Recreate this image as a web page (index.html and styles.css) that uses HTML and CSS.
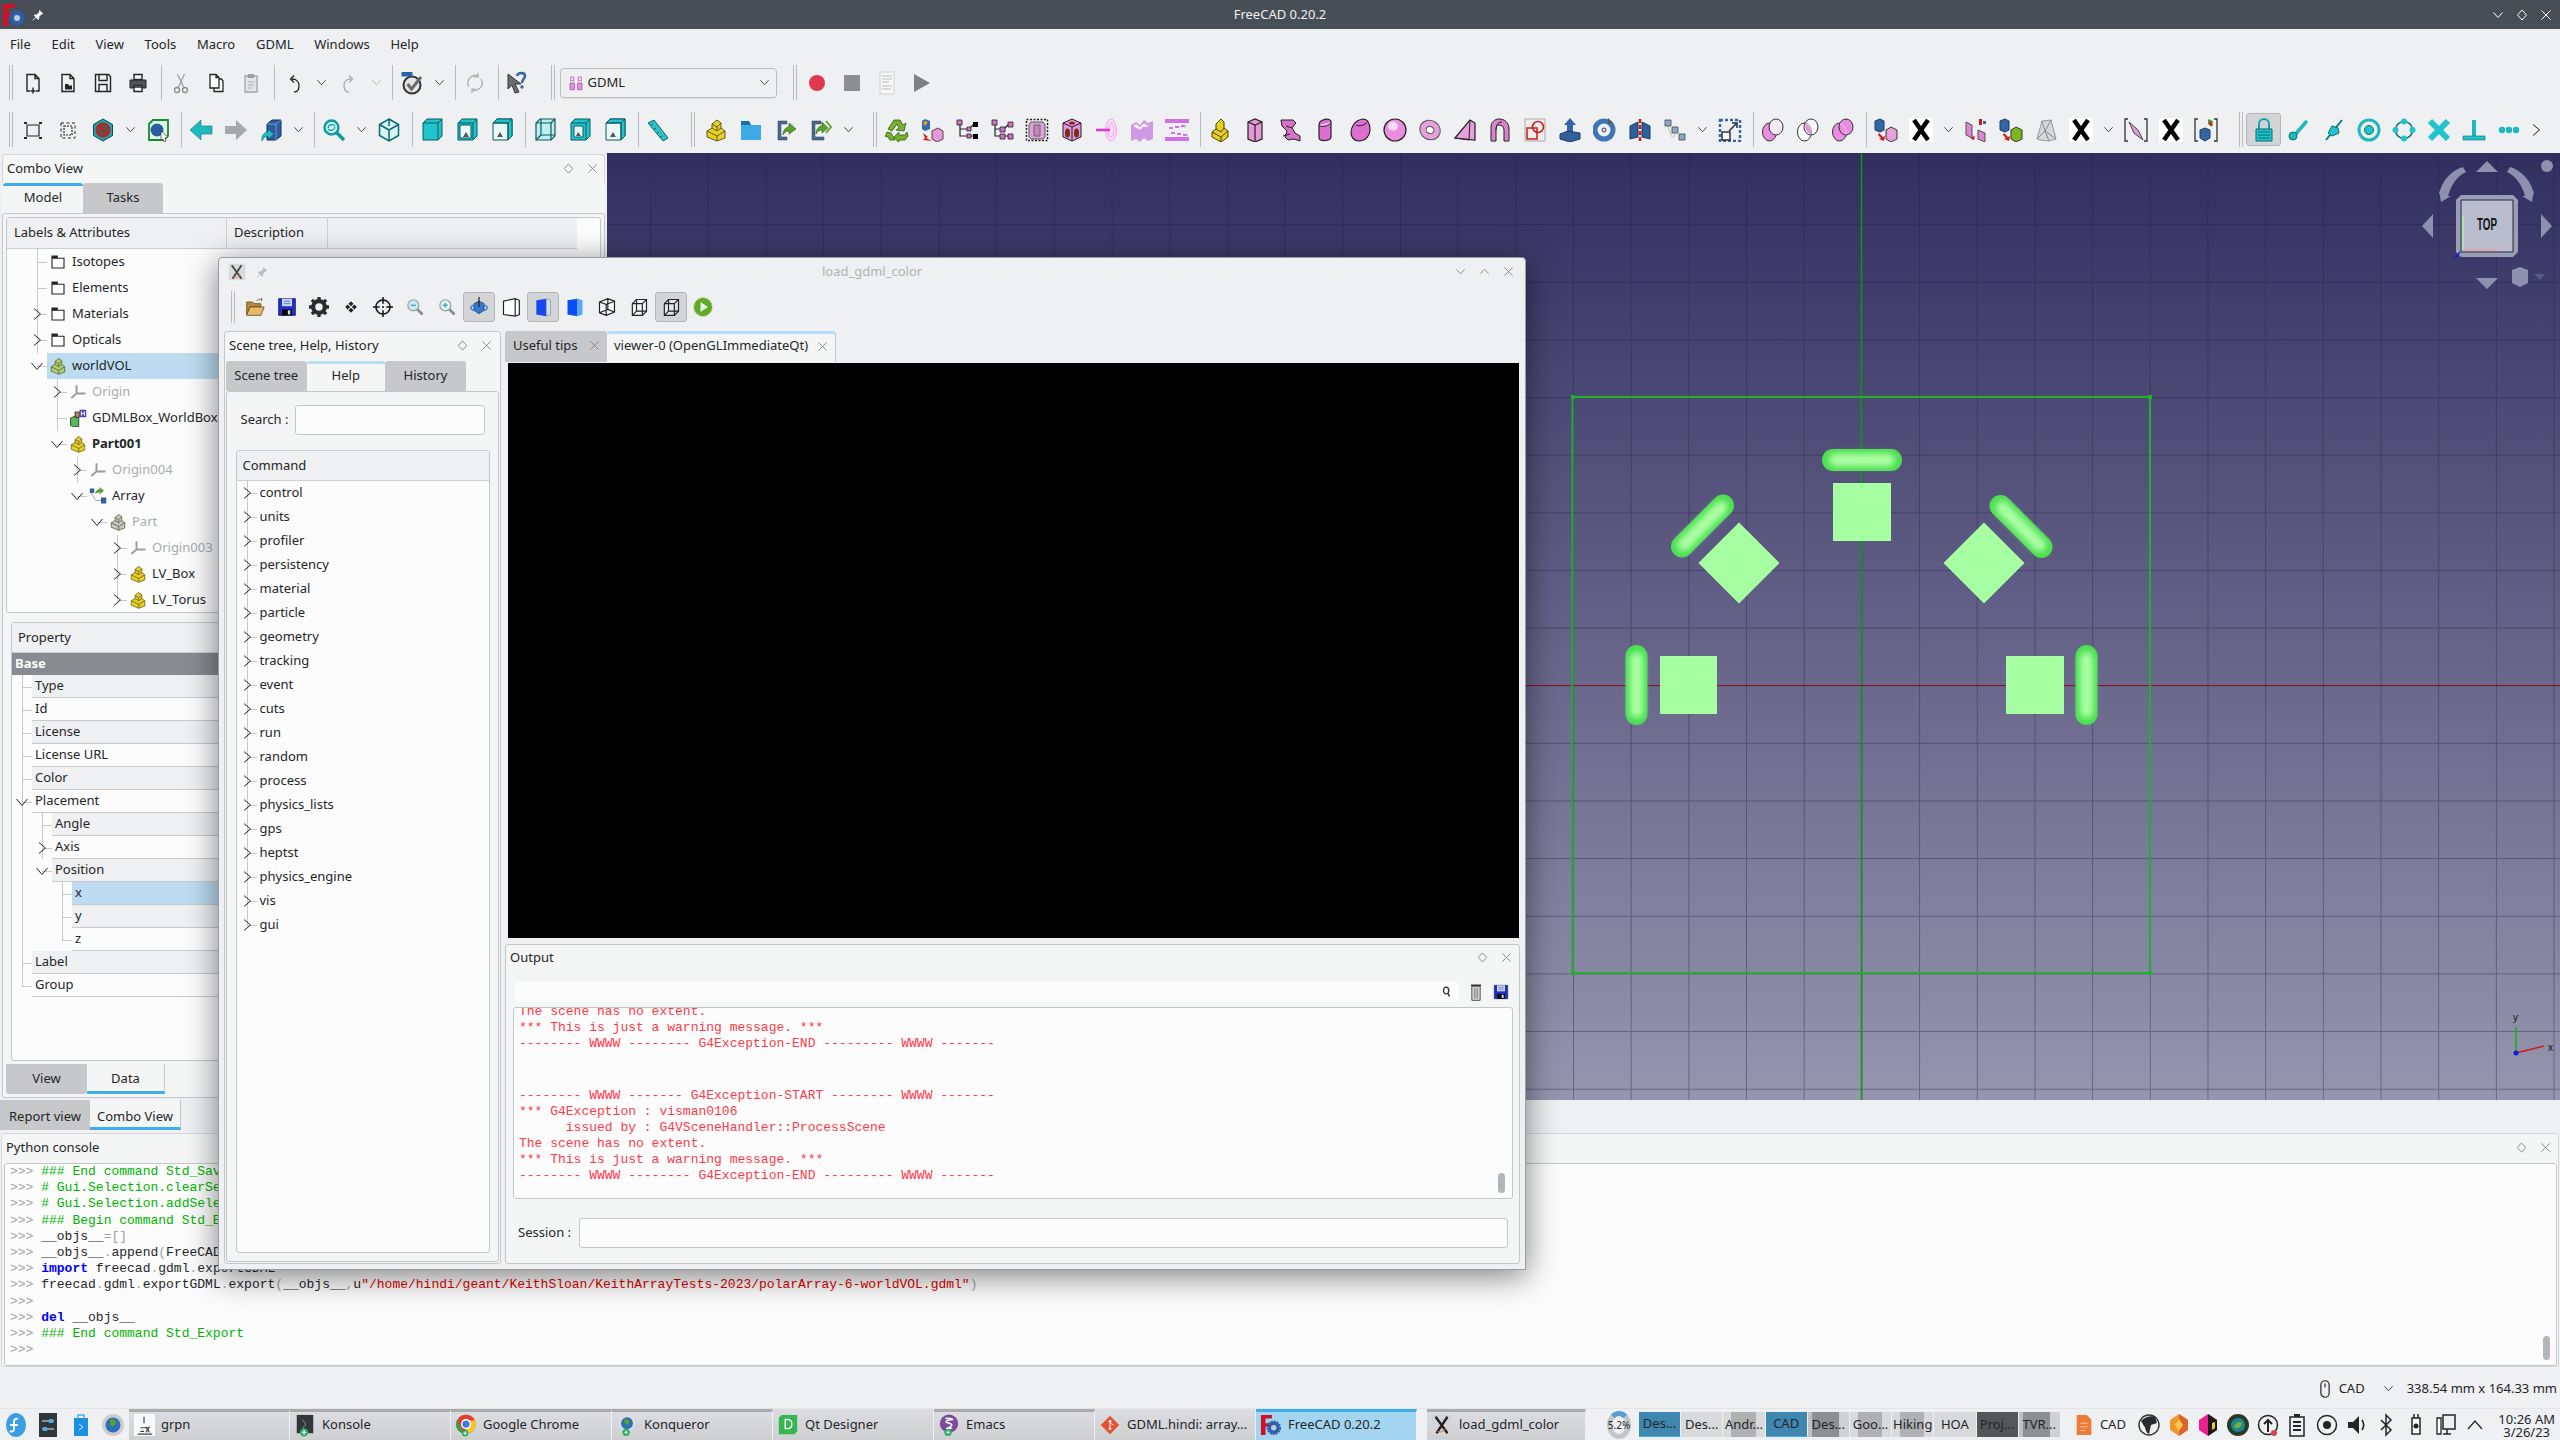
FILE: index.html
```html
<!DOCTYPE html>
<html lang="en">
<head>
<meta charset="utf-8">
<title>FreeCAD 0.20.2</title>
<link rel="stylesheet" href="styles.css">
</head>
<body>
<svg class="defs" aria-hidden="true">
<defs>
<filter id="bl" x="-30%" y="-60%" width="160%" height="220%"><feGaussianBlur stdDeviation="3"/></filter>
<pattern id="grid" patternUnits="userSpaceOnUse" x="1573" y="397" width="57.68" height="57.64"><path d="M.5 0V58M0 .5H58" fill="none" stroke="#23233c" stroke-opacity=".4"/></pattern>
<g id="capsule"><rect x="-40" y="-11" width="80" height="22" rx="11" fill="#4ade50"/><rect x="-33" y="-6.500" width="66" height="13" rx="6.500" fill="#aeffa6" filter="url(#bl)"/></g>
</defs>
<symbol id="new" viewBox="0 0 24 24"><path d="M9 20H6V3.5h8l4 4V20h-3M14 3.500v4h4M12 16.500v6M9.500 20h5" fill="none" stroke="#232629" stroke-width="1.4"/></symbol>
<symbol id="open" viewBox="0 0 24 24"><path d="M6 3.500h8l4 4V20.500H6zM14 3.500v4h4" fill="none" stroke="#232629" stroke-width="1.4"/><path d="M9 13h3l1 1.500h3v4H9z" fill="#232629"/></symbol>
<symbol id="save" viewBox="0 0 24 24"><path d="M4.500 3.500h13l2 2v15h-15zM8 3.500v6h8v-6M8 20.500v-7h8v7" fill="none" stroke="#232629" stroke-width="1.4"/></symbol>
<symbol id="print" viewBox="0 0 24 24"><path d="M8 3.500h8v5H8zM8 16h8v4.500H8z" fill="#fff" stroke="#232629" stroke-width="1.4"/><path d="M4 9h16v8h-3.500v-2.500h-9V17H4z" fill="#4d5257" stroke="#232629"/></symbol>
<symbol id="cut" viewBox="0 0 24 24"><path d="M8.500 3l6 13M15.500 3l-6 13" fill="none" stroke="#a0a3a6" stroke-width="1.3"/><circle cx="8" cy="19" r="2.500" fill="none" stroke="#8a8d90" stroke-width="1.300"/><circle cx="16" cy="19" r="2.500" fill="none" stroke="#8a8d90" stroke-width="1.300"/></symbol>
<symbol id="copy" viewBox="0 0 24 24"><path d="M6 3.500h6l3 3V17H6zM12 3.500v3h3M15 8h2.500l1.500 2v10.500h-9V17" fill="#fff" stroke="#232629" stroke-width="1.300"/></symbol>
<symbol id="paste" viewBox="0 0 24 24"><path d="M6 5h12v16H6z" fill="#e4e5e6" stroke="#a4a7aa" stroke-width="1.300"/><path d="M9 3h6v4H9z" fill="#9a9da0"/><path d="M9 11h6M9 14h6M9 17h4" stroke="#aaadb0"/></symbol>
<symbol id="undo" viewBox="0 0 24 24"><path d="M12 21c4 0 5-3.500 5-6.500C17 11 14.500 8 10 8M12 4.500L8.500 8l3.500 3.500" fill="none" stroke="#232629" stroke-width="1.300"/></symbol>
<symbol id="redo" viewBox="0 0 24 24"><path d="M12 21c-4 0-5-3.500-5-6.500C7 11 9.500 8 14 8M12 4.500L15.500 8 12 11.500" fill="none" stroke="#a8abae" stroke-width="1.300"/></symbol>
<symbol id="chev" viewBox="0 0 12 12"><path d="M1.500 3.500L6 8.500l4.500-5" fill="none" stroke="#3a3f44" stroke-width="1"/></symbol>
<symbol id="chu" viewBox="0 0 12 12"><path d="M1.500 8.500L6 3.500l4.500 5" fill="none" stroke="#3a3f44" stroke-width="1"/></symbol>
<symbol id="chr" viewBox="0 0 12 12"><path d="M3 .5L9.500 6 3 11.500" fill="none" stroke="#232629" stroke-width="1"/></symbol>
<symbol id="chd" viewBox="0 0 12 12"><path d="M.5 3L6 9.500 11.500 3" fill="none" stroke="#232629" stroke-width="1"/></symbol>
<symbol id="macro" viewBox="0 0 24 24"><circle cx="12" cy="14" r="8.500" fill="#e6e6e6" stroke="#333" stroke-width="2"/><path d="M7.500 13l4 5L21 6" fill="none" stroke="#6b6b6b" stroke-width="3"/><path d="M1.500 1h11v4.500h-11z" fill="#2566a8"/></symbol>
<symbol id="refresh" viewBox="0 0 24 24"><path d="M6 16a7.500 7.500 0 0 1 9-11M18 8a7.500 7.500 0 0 1-9 11M15 2v4h-4M9 22v-4h4" fill="none" stroke="#a8abae" stroke-width="1.200"/></symbol>
<symbol id="what" viewBox="0 0 24 24"><path d="M2 3l13 10h-6l4 8-4 1-3-8-4 4z" fill="#6e6e6e" stroke="#333"/><path d="M11 5c1-4 8-4 8 0 0 3-3 3-3 7" fill="none" stroke="#3465a4" stroke-width="2.500"/><circle cx="16" cy="16" r="1.700" fill="#3465a4"/></symbol>
<symbol id="gdml" viewBox="0 0 24 24"><path d="M4 12h6v9H4zM14 12h6v9h-6z" fill="#e58fe0" stroke="#a05aa0"/><path d="M5 4h4v5H5zM15 4h4v5h-4z" fill="none" stroke="#c080c0" stroke-width="1.500"/></symbol>
<symbol id="rec" viewBox="0 0 24 24"><circle cx="12" cy="12" r="8" fill="#e0394f"/></symbol>
<symbol id="stop" viewBox="0 0 24 24"><path d="M4 4h16v16H4z" fill="#8e8e8e"/></symbol>
<symbol id="page" viewBox="0 0 24 24"><path d="M5 1h14v22H5z" fill="#f8f8f8" stroke="#d0d0d0"/><path d="M7 5h10M7 8h10M7 11h7M7 15h10M7 18h9" stroke="#bbb"/></symbol>
<symbol id="play" viewBox="0 0 24 24"><path d="M4 3l16 9-16 9z" fill="#808080"/></symbol>
<symbol id="fit" viewBox="0 0 24 24"><path d="M6 7h12v11H6z" fill="none" stroke="#232629" stroke-width="1.200"/><path d="M3 4h3v2H3zM18 4h3v2h-3zM3 19h3v2H3zM18 19h3v2h-3z" fill="#232629"/></symbol>
<symbol id="fits" viewBox="0 0 24 24"><path d="M8 8h8v9H8z" fill="none" stroke="#232629" stroke-width="1.200" stroke-dasharray="2 1"/><path d="M5 5h14v15H5z" fill="none" stroke="#232629" stroke-dasharray="3 2.500"/></symbol>
<symbol id="nope" viewBox="0 0 24 24"><path d="M12 1l9.500 5.500v11L12 23l-9.500-5.500v-11z" fill="#17a8ae" stroke="#0a4a50"/><circle cx="12" cy="12" r="6.500" fill="#555" stroke="#d01818" stroke-width="2"/><path d="M7.500 7.500l9 9" stroke="#d01818" stroke-width="2"/></symbol>
<symbol id="boxsel" viewBox="0 0 24 24"><path d="M3 6l4-4h15v16l-4 4H3z" fill="#dfe" stroke="#128a28" stroke-width="1.800"/><circle cx="11" cy="12" r="6.500" fill="#2a5ea0"/><path d="M15 13l7 6-3 1 1 3-2 1-1-3-2 1z" fill="#fff" stroke="#333" stroke-width=".7"/></symbol>
<symbol id="aleft" viewBox="0 0 24 24"><path d="M1 12L12 2v6h11v8H12v6z" fill="#20b8c0" stroke="#0c7a80" stroke-width=".6"/></symbol>
<symbol id="aright" viewBox="0 0 24 24"><path d="M23 12L12 2v6H1v8h11v6z" fill="#a6a8aa"/></symbol>
<symbol id="bluebox" viewBox="0 0 24 24"><path d="M8 6l5-4h9v16l-5 4H8z" fill="#2c5c9c" stroke="#16325a"/><path d="M17 22V6h-9M17 6l5-4" fill="none" stroke="#6f98c8"/><path d="M3 23c-1-5 2-9 6-9v-3l6 5-6 5v-3c-3 0-4 2-6 5z" fill="#1fbcc4" stroke="#0a5a60" stroke-width=".5"/></symbol>
<symbol id="zoom" viewBox="0 0 24 24"><circle cx="9.500" cy="9.500" r="7" fill="#c9f1f2" stroke="#1199a0" stroke-width="2.400"/><path d="M14.500 14.500L22 22" stroke="#1199a0" stroke-width="3.500"/><path d="M6 10a4 4 0 0 1 7-2M13 9a4 4 0 0 1-7 2" fill="none" stroke="#1199a0" stroke-width="1.300"/></symbol>
<symbol id="iso" viewBox="0 0 24 24"><path d="M12 1l9.500 5.500v11L12 23l-9.500-5.500v-11zM12 1v7M2.500 6.500L12 12M21.500 6.500L12 12M12 12v11" fill="#d7f3f4" stroke="#0b6a70" stroke-width="1.500"/></symbol>
<symbol id="vf" viewBox="0 0 24 24"><path d="M3 5l4-4h15v17l-4 4H3z" fill="#1fc4cc" stroke="#0b5a60"/><path d="M3 5h15v17M18 5l4-4" fill="none" stroke="#0b5a60"/></symbol>
<symbol id="vt" viewBox="0 0 24 24"><path d="M3 5l4-4h15v17l-4 4H3z" fill="#1fc4cc" stroke="#0b5a60"/><path d="M5 7h11v13H5z" fill="#e9f7f7" stroke="#0b5a60"/><path d="M8 19l3-5 3 5z" fill="#555"/><path d="M18 5l4-4M3 5h15v17" fill="none" stroke="#0b5a60"/></symbol>
<symbol id="vr" viewBox="0 0 24 24"><path d="M3 5l4-4h15v17l-4 4H3z" fill="#e9f7f7" stroke="#0b5a60"/><path d="M3 5l4-4h15l-4 4zM18 5l4-4v17l-4 4z" fill="#1fc4cc" stroke="#0b5a60"/><path d="M7 19l3-5 3 5z" fill="#555"/><path d="M3 5h15v17" fill="none" stroke="#0b5a60"/></symbol>
<symbol id="vb" viewBox="0 0 24 24"><path d="M3 5l4-4h15v17l-4 4H3z" fill="#bfeef0" stroke="#0b5a60" stroke-width="1.200"/><path d="M8 1v16h14M8 17l-5 5M3 5h15v17M18 5l4-4" fill="none" stroke="#0b5a60" stroke-width="1.200"/></symbol>
<symbol id="vb2" viewBox="0 0 24 24"><path d="M3 5l4-4h15v17l-4 4H3z" fill="#1fc4cc" stroke="#0b5a60"/><path d="M6 8h9v11H6z" fill="#eaf8f8" stroke="#0b5a60"/><path d="M18 5l4-4M3 5h15v17" fill="none" stroke="#0b5a60"/><path d="M8 18l2-4 3 4z" fill="#555"/></symbol>
<symbol id="ruler" viewBox="0 0 24 24"><path d="M2 5l6-3 14 18-5 3z" fill="#30c0c8" stroke="#0b6a70"/><path d="M7 6l-2 1M10 10l-2 1M13 14l-2 1M16 18l-2 1" stroke="#0b5a60"/></symbol>
<symbol id="part" viewBox="0 0 24 24"><path d="M3 13l5-3V6l5-4 4 3v5l4 3v7l-8 3-10-4z" fill="currentColor" stroke="#5f5a20" stroke-width="1"/><path d="M3 13l10 5 8-5M13 18v5M8 10l5 3 4-3M8 6l5 3 4-4M13 9v4" fill="none" stroke="#5f5a20" stroke-width="1"/></symbol>
<symbol id="folderb" viewBox="0 0 24 24"><path d="M2 3h8l2 4h10v15H2z" fill="#3da9e6"/><path d="M2 3h8l2 4H2z" fill="#1d6fa8"/></symbol>
<symbol id="grpin" viewBox="0 0 24 24"><path d="M4 3h9v3H7v13h6v3H4z" fill="#4a6a90" stroke="#2a3e58" stroke-width=".5"/><path d="M13 5h7v4h-7z" fill="#dce6f0"/><path d="M9 17c0-5 3-8 6-8V5l7 6-7 5v-3c-2 0-5 1-6 4z" fill="#5aa02c" stroke="#2c5c10" stroke-width=".6"/></symbol>
<symbol id="grpout" viewBox="0 0 24 24"><path d="M3 3h9v3H6v13h9v3H3z" fill="#4a6a90" stroke="#2a3e58" stroke-width=".5"/><path d="M7 16c0-5 3-8 6-8V4l6 6-6 5v-3c-2 0-5 1-6 4z" fill="#5aa02c" stroke="#2c5c10" stroke-width=".6"/><path d="M17 3l5 6-5 6" fill="none" stroke="#5aa02c" stroke-width="1.800"/></symbol>
<symbol id="recyc" viewBox="0 0 24 24"><path d="M9 2h6l3 5 3-2-2 8-8-1 3-2-2-4-5 7-4-2zM22 14l1 4-3 4h-6v3l-5-6 5-5v3h6zM2 14l4 1 4 7H5l-3-4-2 1z" fill="#78b030" stroke="#2e5a10" stroke-width=".8"/></symbol>
<symbol id="hexgd" viewBox="0 0 24 24"><path d="M5 1l5 2v8l-5 2-3-2V3z" fill="#2e6cb0"/><path d="M5 3l3 1-3 4-2-3z" fill="#e8a020"/><path d="M12 13l6-3 5 3v8l-6 3-5-3z" fill="#e596dc" stroke="#543"/><path d="M3 15l5 4-2 1 6 3-9-1 2-2z" fill="#d01818"/></symbol>
<symbol id="tree1" viewBox="0 0 24 24"><path d="M5 5v6h9M5 11v7h9M14 11l5-5M14 18h5" fill="none" stroke="#222" stroke-width="1.200"/><path d="M2 2h5v5H2zM12 9h4v4h-4zM12 16h4v4h-4z" fill="#d070c8" stroke="#222" stroke-width=".8"/><path d="M18 4h5v5h-5zM18 16h5v5h-5z" fill="#000"/></symbol>
<symbol id="tree2" viewBox="0 0 24 24"><path d="M5 5v6h9M5 11v7h9M14 11l5-5M14 18h5" fill="none" stroke="#222" stroke-width="1.200"/><path d="M2 2h5v5H2zM10 9h5v5h-5zM10 16h5v5h-5zM18 4h5v5h-5zM18 16h5v5h-5z" fill="#d070c8" stroke="#222" stroke-width=".8"/></symbol>
<symbol id="dotsel" viewBox="0 0 24 24"><path d="M1.500 1.500h21v21h-21z" fill="none" stroke="#222" stroke-width="1.500" stroke-dasharray="2 1.500"/><path d="M6 4h12l2 3v12l-2 2H6l-2-2V7z" fill="#e0a0d8" stroke="#555"/><path d="M9 7h6v11H9z" fill="#c088b8" stroke="#666"/></symbol>
<symbol id="holes" viewBox="0 0 24 24"><path d="M12 1l9 4v14l-9 4-9-4V5z" fill="#e596dc" stroke="#222"/><path d="M3 5l9 4 9-4M12 9v14" fill="none" stroke="#222"/><ellipse cx="7.500" cy="15" rx="2.500" ry="4.500" fill="#7a3010"/><ellipse cx="16.500" cy="15" rx="2.500" ry="4.500" fill="#7a3010"/><ellipse cx="12" cy="5" rx="3" ry="1.500" fill="#7a3010"/></symbol>
<symbol id="rayd" viewBox="0 0 24 24"><ellipse cx="16" cy="12" rx="5.500" ry="11" fill="#fbdcf8" stroke="#f0a8ea"/><ellipse cx="16" cy="12" rx="3" ry="7" fill="none" stroke="#f0a8ea"/><path d="M1 12h14" stroke="#e832d8" stroke-width="2.500"/></symbol>
<symbol id="wavy" viewBox="0 0 24 24"><path d="M1 7l5-3 4 3 4-5 4 3 5-2v18l-5 2-4-3-4 4-4-3-5 2z" fill="#cf98e2"/><path d="M3 8l3-2 4 3 4-4 4 3 4-2-5 3-4 0-3 3z" fill="#eee"/></symbol>
<symbol id="stripes" viewBox="0 0 24 24"><path d="M0 1h24v4H0zM0 19h24v4H0z" fill="#d070e8"/><path d="M4 9h4v2H4zM10 8h4v2h-4zM16 7h4v2h-4zM6 14h4v2H6zM12 15h4v2h-4zM18 16h4v2h-4z" fill="#d070e8"/><path d="M20 7v3M22 16v2" stroke="#bbb"/></symbol>
<symbol id="ppart" viewBox="0 0 24 24"><path d="M4 14l4-3V6l5-5 3 3v6l4 3v6l-7 5-9-5z" fill="#e8d020" stroke="#4a4000"/><path d="M4 14l9 5 7-6M13 19v5M8 11l5 3M13 14l3-4" fill="none" stroke="#4a4000"/></symbol>
<symbol id="pbox" viewBox="0 0 24 24"><path d="M5 4l7-3 7 3v17l-7 3-7-3z" fill="#e59ad8" stroke="#222" stroke-width="1.200"/><path d="M5 4l7 3 7-3M12 7v17" fill="none" stroke="#222" stroke-width="1.200"/></symbol>
<symbol id="ptwist" viewBox="0 0 24 24"><path d="M3 2h12l3 3-4 5 3 5 5 3v5l-6-2-6 1-3-3 2-6-5-5z" fill="#d672c8" stroke="#222"/><path d="M8 8l6 2M5 18l7-2" stroke="#222" fill="none"/></symbol>
<symbol id="pcyl" viewBox="0 0 24 24"><path d="M6 7c0-6 12-8 12-3v15c0 4-12 5-12 1z" fill="#de6fd2" stroke="#222" stroke-width="1.200"/><path d="M6 7c0 3 12 1 12-3" fill="#f3c0ec" stroke="#222"/></symbol>
<symbol id="pcone" viewBox="0 0 24 24"><path d="M3 15c0-5 3-13 12-14 6 0 7 6 7 11 0 5-4 11-11 11-5 0-8-4-8-8z" fill="#de6fd2" stroke="#222" stroke-width="1.200"/><path d="M8 7c3 2 10 0 12-4" fill="none" stroke="#222"/></symbol>
<symbol id="psph" viewBox="0 0 24 24"><ellipse cx="12" cy="12" rx="11" ry="11" fill="#e88ddf" stroke="#222" stroke-width="1.200"/><ellipse cx="10" cy="8" rx="5" ry="4.500" fill="#f8dcf5"/></symbol>
<symbol id="ptor" viewBox="0 0 24 24"><ellipse cx="12" cy="12" rx="10.500" ry="9.500" fill="#e8a0dc" stroke="#555" transform="rotate(30 12 12)"/><ellipse cx="12" cy="12" rx="4" ry="3.500" fill="#fff" stroke="#555" transform="rotate(30 12 12)"/></symbol>
<symbol id="pwedge" viewBox="0 0 24 24"><path d="M2 20L17 2l5 3v17z" fill="#e8a0dc" stroke="#222" stroke-width="1.200"/><path d="M17 2l-1 20M2 20l14 2" fill="none" stroke="#222"/></symbol>
<symbol id="ptube" viewBox="0 0 24 24"><path d="M3 23V9c0-5 4-8 8-8 6 0 10 4 10 10v12h-5V12c0-3-2-5-5-5-2 0-3 2-3 5v11z" fill="#d985cc" stroke="#222"/><path d="M8 12C8 6 11 4 14 4" fill="none" stroke="#222"/></symbol>
<symbol id="sketch" viewBox="0 0 24 24"><path d="M2 1h20v22H2z" fill="#eee" stroke="#aaa"/><path d="M4 10h10v11H4z" fill="none" stroke="#d01818" stroke-width="1.500"/><circle cx="15" cy="9" r="5.500" fill="none" stroke="#d01818" stroke-width="1.500"/></symbol>
<symbol id="extr" viewBox="0 0 24 24"><path d="M12 0l6 7h-3v8H9V7H6z" fill="#3465a4"/><path d="M2 16l8-3 12 2v6l-10 3-10-3z" fill="#2f5f9c" stroke="#1c3c66"/></symbol>
<symbol id="revo" viewBox="0 0 24 24"><circle cx="11" cy="12" r="9" fill="none" stroke="#3f75b5" stroke-width="5"/><circle cx="11" cy="12" r="2" fill="none" stroke="#1c3c66"/><path d="M15 0l5 5-5 1z" fill="#555"/></symbol>
<symbol id="mirror" viewBox="0 0 24 24"><path d="M10 4L2 8v13l8-2zM14 4l8 4v13l-8-2z" fill="#2f5f9c" stroke="#1c3c66"/><path d="M12 1v22" stroke="#d01818" stroke-width="2.500" stroke-dasharray="4 2"/></symbol>
<symbol id="stack" viewBox="0 0 24 24"><path d="M2 2h6v6H2zM9 9h6v6H9zM16 16h6v6h-6z" fill="#8ca8c8" stroke="#444" stroke-width=".8"/><path d="M5 9l4 10M12 16l-2 4" stroke="#bbb"/></symbol>
<symbol id="scale" viewBox="0 0 24 24"><path d="M2 2h20v21H2z" fill="none" stroke="#3465a4" stroke-width="2.500" stroke-dasharray="3 2"/><path d="M4 14h8v8H4z" fill="#fff" stroke="#234" stroke-width="1.500"/><path d="M11 13l7-7M14 5h5v5" fill="none" stroke="#234" stroke-width="1.500"/></symbol>
<symbol id="bfuse" viewBox="0 0 24 24"><ellipse cx="8.500" cy="14" rx="7" ry="9" fill="#e88ddf" stroke="#333"/><ellipse cx="15" cy="9" rx="7" ry="8" fill="#f7eaf5" stroke="#333"/></symbol>
<symbol id="bcom" viewBox="0 0 24 24"><ellipse cx="8.500" cy="14" rx="7" ry="9" fill="#fff" stroke="#333"/><ellipse cx="15" cy="9" rx="7" ry="8" fill="#fff" fill-opacity=".5" stroke="#333"/><path d="M9 5.500c3 1 6 4 6 11-3-1-6-4-6-11z" fill="#e88ddf"/></symbol>
<symbol id="bun" viewBox="0 0 24 24"><ellipse cx="8.500" cy="14" rx="7" ry="9" fill="#e88ddf" stroke="#333"/><ellipse cx="15" cy="9" rx="7" ry="8" fill="#e88ddf" stroke="#333"/><path d="M9 5.500c3 1 6 4 6 11" fill="none" stroke="#f4c0ee"/></symbol>
<symbol id="bp" viewBox="0 0 24 24"><path d="M1 3l5-2 4 2v9l-4 2-5-2z" fill="#3465a4" stroke="#1c3c66"/><path d="M12 12l5-3 6 3v9l-6 3-5-3z" fill="#e8a0dc" stroke="#333"/><path d="M5 15l4 4 2-1-1 5-5-2 2-1-3-3z" fill="#d01818"/></symbol>
<symbol id="xx" viewBox="0 0 24 24"><path d="M0 0h24v24H0z" fill="#fff"/><path d="M5 2l14 20M19 2L5 22" stroke="#000" stroke-width="4.500"/></symbol>
<symbol id="slice" viewBox="0 0 24 24"><path d="M2 4l6 3v13l-6-3zM14 12l7 3v9l-7-3z" fill="#d88ad0" stroke="#333" stroke-width=".8"/><path d="M15 1h3v6h-3z" fill="#d01818"/><path d="M19 3h3v3h-3z" fill="#3465a4"/><path d="M8 19l3-1-1 4-3-1z" fill="#d01818"/></symbol>
<symbol id="bgp" viewBox="0 0 24 24"><path d="M1 3l5-2 4 2v9l-4 2-5-2z" fill="#3465a4" stroke="#1c3c66"/><path d="M12 12l5-3 6 3v9l-6 3-5-3z" fill="#7cb820" stroke="#333"/><path d="M5 15l4 4 2-1-1 5-5-2 2-1-3-3z" fill="#d01818"/></symbol>
<symbol id="gmesh" viewBox="0 0 24 24"><path d="M3 21L8 3l9-1 5 19-7 2-9-1z" fill="#d8d8d8" stroke="#999"/><path d="M8 3l3 10-8 8M17 2l-6 11 11 8M11 13l4 10" fill="none" stroke="#888"/></symbol>
<symbol id="brkd" viewBox="0 0 24 24"><path d="M4 1H1v22h3M20 1h3v22h-3" fill="none" stroke="#333" stroke-width="1.300"/><path d="M5 4l9 8 5 10-9-7z" fill="#e59ad8" stroke="#444"/></symbol>
<symbol id="brkb" viewBox="0 0 24 24"><path d="M4 1H1v22h3M20 1h3v22h-3" fill="none" stroke="#333" stroke-width="1.300"/><path d="M6 12l5-2 5 2v8l-5 3-5-3z" fill="#3465a4" stroke="#1c3c66"/><path d="M14 1l5 2-1 6-4-3z" fill="#5aa02c"/><path d="M15 2l4 5-3 1z" fill="#d01818"/></symbol>
<symbol id="lock" viewBox="0 0 24 24"><path d="M7 12V6a5 5 0 0 1 10 0v6" fill="none" stroke="#14a5ac" stroke-width="2"/><path d="M4 11h16v12H4z" fill="#1fc4cc" stroke="#0b6a70"/><path d="M6 14h12M6 17h12M6 20h12" stroke="#0b6a70"/></symbol>
<symbol id="tl1" viewBox="0 0 24 24"><path d="M19 4L7 18" stroke="#1fb8c0" stroke-width="3.500"/><circle cx="6" cy="18" r="4" fill="#1fb8c0" stroke="#0b6a70"/><circle cx="19" cy="4" r="1.700" fill="#1fb8c0"/></symbol>
<symbol id="tl2" viewBox="0 0 24 24"><path d="M20 2L4 22" stroke="#0b7a80" stroke-width="2"/><path d="M10 8l6 2 1 5-7 3-4-3z" fill="#1fc4cc" stroke="#0b6a70"/></symbol>
<symbol id="tl3" viewBox="0 0 24 24"><circle cx="12" cy="12" r="10" fill="none" stroke="#1fb8c0" stroke-width="3"/><circle cx="12" cy="12" r="4.500" fill="#1fc4cc" stroke="#0b6a70"/></symbol>
<symbol id="tl4" viewBox="0 0 24 24"><circle cx="12" cy="12" r="8.500" fill="none" stroke="#0b6a70" stroke-width="1.500"/><circle cx="12" cy="3.500" r="3" fill="#1fc4cc"/><circle cx="12" cy="20.500" r="3" fill="#1fc4cc"/><circle cx="3.500" cy="12" r="3" fill="#1fc4cc"/><circle cx="20.500" cy="12" r="3" fill="#1fc4cc"/></symbol>
<symbol id="tl5" viewBox="0 0 24 24"><path d="M3 3l18 18M21 3L3 21" stroke="#1fc4cc" stroke-width="6"/></symbol>
<symbol id="tl6" viewBox="0 0 24 24"><path d="M12 2v18" stroke="#1fb8c0" stroke-width="4"/><path d="M1 18h22v4H1z" fill="#1fc4cc" stroke="#0b6a70" stroke-width=".6"/></symbol>
<symbol id="tl7" viewBox="0 0 24 24"><circle cx="5" cy="12" r="3.200" fill="#1fb8c0"/><circle cx="12" cy="12" r="3.200" fill="#1fb8c0"/><circle cx="19" cy="12" r="3.200" fill="#1fb8c0"/></symbol>
<symbol id="xapp" viewBox="0 0 24 24"><path d="M1 1h22v22H1z" fill="#d4d5d7"/><path d="M5 3l13 18M18 3L6 21" stroke="#222" stroke-width="2.600"/><path d="M16 15a6 6 0 0 1-10 3" fill="none" stroke="#d07030"/></symbol>
<symbol id="fc" viewBox="0 0 24 24"><path d="M1 1h12v4H6v5h5v4H6v9H1z" fill="#d01028"/><circle cx="15" cy="15" r="6.500" fill="#2f5fa8" stroke="#2f5fa8" stroke-width="3" stroke-dasharray="2 1"/><circle cx="15" cy="15" r="3" fill="#bcd"/></symbol>
<symbol id="pin" viewBox="0 0 24 24"><path d="M14 3l7 7-3 1-4 4 0 4-2 1-7-7 1-2h4l4-4z" fill="currentColor"/><path d="M8 16l-5 5" stroke="currentColor" stroke-width="1.500"/></symbol>
<symbol id="dia" viewBox="0 0 12 12"><path d="M6 1l4.500 5L6 11 1.500 6z" fill="none" stroke="currentColor" stroke-width="1"/></symbol>
<symbol id="cls" viewBox="0 0 12 12"><path d="M1.500 1.500l9 9M10.500 1.500l-9 9" fill="none" stroke="currentColor" stroke-width="1"/></symbol>
<symbol id="fold" viewBox="0 0 24 24"><path d="M4 7h16v13H4zM4 7V4h7v3" fill="#fff" stroke="#232629" stroke-width="1.500"/><path d="M4 4h7v3H4z" fill="#232629"/></symbol>
<symbol id="axes" viewBox="0 0 24 24"><path d="M10 3v11L3 20M10 14h12" fill="none" stroke="#9a9da0" stroke-width="2.600"/></symbol>
<symbol id="gbox" viewBox="0 0 24 24"><path d="M2 12l5-2 6 2v11l-6 1-5-2z" fill="#58b858" stroke="#222"/><path d="M8 4h6v7H8z" fill="#b48440" stroke="#222"/><path d="M14 1h9v10h-9z" fill="#4a46c0"/><path d="M16.500 3v6M20.500 3v6M16.500 6h4" stroke="#fff" stroke-width="1.300"/></symbol>
<symbol id="arr" viewBox="0 0 24 24"><path d="M1 2h6v6H1z" fill="#3465a4"/><path d="M3 8l6 10h6l3-4" fill="none" stroke="#888"/><path d="M16 14h7v8h-7z" fill="#2f5f9c"/><path d="M8 9c1-4 3-6 6-6V0l6 5-6 5V7c-2 0-4 1-6 2z" fill="#5aa02c"/></symbol>
<symbol id="fopen" viewBox="0 0 24 24"><path d="M2 6h7l2 2h8v4H6L2 21z" fill="#b88a40" stroke="#6b4a10"/><path d="M6 12h17l-4 10H2z" fill="#e9b96e" stroke="#6b4a10"/><path d="M14 5c1-2 4-3 6-2M20 1v4" fill="none" stroke="#555"/></symbol>
<symbol id="fsave" viewBox="0 0 24 24"><path d="M2 2h20v20H2z" fill="#2030c0" stroke="#10186a"/><path d="M6 2h12v9H6z" fill="#cfd8f0"/><path d="M8 5h8M8 8h8" stroke="#4a5ac0"/><path d="M6 15h12v7H6z" fill="#000"/><path d="M13 16h3v5h-3z" fill="#cfd8f0"/></symbol>
<symbol id="gear" viewBox="0 0 24 24"><circle cx="12" cy="12" r="7" fill="none" stroke="#2c2c2c" stroke-width="5"/><path d="M12 0v5M12 19v5M0 12h5M19 12h5M3.500 3.500l3.500 3.500M17 17l3.500 3.500M20.500 3.500L17 7M7 17l-3.500 3.500" stroke="#2c2c2c" stroke-width="4"/></symbol>
<symbol id="move" viewBox="0 0 24 24"><path d="M12 5l3 3-3 3-3-3zM12 13l3 3-3 3-3-3zM8 9l3 3-3 3-3-3zM16 9l3 3-3 3-3-3z" fill="#222"/></symbol>
<symbol id="target" viewBox="0 0 24 24"><circle cx="12" cy="12" r="8.500" fill="none" stroke="#111" stroke-width="1.800"/><path d="M12 0v8M12 16v8M0 12h8M16 12h8" stroke="#111" stroke-width="1.800"/><circle cx="12" cy="12" r="1.200" fill="#111"/></symbol>
<symbol id="zout" viewBox="0 0 24 24"><circle cx="10" cy="10" r="6.500" fill="#cfe9f0" stroke="#9aa" stroke-width="1.600"/><path d="M15 15l6 6" stroke="#888" stroke-width="3"/><path d="M7 10h6" stroke="#5aa" stroke-width="1.800"/></symbol>
<symbol id="zin" viewBox="0 0 24 24"><circle cx="10" cy="10" r="6.500" fill="#e8f4f6" stroke="#9aa" stroke-width="1.600"/><path d="M15 15l6 6" stroke="#888" stroke-width="3"/><path d="M7 10h6M10 7v6" stroke="#5aa" stroke-width="1.800"/></symbol>
<symbol id="rot" viewBox="0 0 24 24"><path d="M12 5l6 3v8l-6 4-6-4V8z" fill="#3f75c5" stroke="#1c3c66"/><ellipse cx="12" cy="13" rx="10" ry="4" fill="none" stroke="#2a7ae0" stroke-width="1.600"/><path d="M12 0v12" stroke="#222" stroke-width="1.500"/></symbol>
<symbol id="wh" viewBox="0 0 24 24"><path d="M3 5l14-3 5 2v17l-5 2-14-2zM17 2v21" fill="#fff" stroke="#222" stroke-width="1.400"/></symbol>
<symbol id="bh" viewBox="0 0 24 24"><path d="M4 4l12-2v21l-12-2z" fill="#1548f0"/><path d="M16 2l5 2v17l-5 2z" fill="#cfe0ff" stroke="#89a"/></symbol>
<symbol id="bs" viewBox="0 0 24 24"><path d="M3 4l12-2v21l-12-2z" fill="#0a4cf8"/><path d="M15 2l6 2v17l-6 2z" fill="#58a8f0"/></symbol>
<symbol id="wc" viewBox="0 0 24 24"><path d="M3 6l10-4 8 3v13l-10 4-8-3zM3 6l8 3v13M11 9l10-4M13 2v13M3 19l10-4 8 3" fill="#fff" fill-opacity=".5" stroke="#222" stroke-width="1.400"/></symbol>
<symbol id="wc2" viewBox="0 0 24 24"><path d="M4 8l5-5h12v14l-5 5H4zM4 8h12v14M16 8l5-5M9 3v14H21M9 17l-5 5" fill="#fff" fill-opacity=".4" stroke="#222" stroke-width="1.400"/></symbol>
<symbol id="gplay" viewBox="0 0 24 24"><circle cx="12" cy="12" r="11" fill="#62a82c" stroke="#9ccc50" stroke-dasharray="2 1"/><path d="M9 6l9 6-9 6z" fill="#e8f4d8"/></symbol>
<symbol id="mag" viewBox="0 0 12 16"><ellipse cx="5.500" cy="6" rx="3.500" ry="4.500" fill="none" stroke="#333" stroke-width="1.800"/><path d="M8 10l2 4" stroke="#333" stroke-width="2"/></symbol>
<symbol id="trash" viewBox="0 0 16 24"><path d="M3 5h10v17H3z" fill="#ddd" stroke="#333"/><path d="M2 3h12v2H2z" fill="#333"/><path d="M6 7v13M8 7v13M10 7v13" stroke="#777"/></symbol>
<symbol id="konsole" viewBox="0 0 24 24"><path d="M3 1h18v20H3z" fill="#31363b"/><path d="M9 6l4 5-4 5" fill="none" stroke="#99a" stroke-width="1"/><circle cx="11" cy="20" r="4.500" fill="#27ae60"/><path d="M11 17.500v5M8.500 20h5" stroke="#fff" stroke-width="1.300"/></symbol>
<symbol id="calc" viewBox="0 0 24 24"><path d="M1 0h23v24H1z" fill="#fafafa"/><path d="M12 3v7M8 15h10M8 19h4M14 14l4 6M18 14l-4 6M5 22h16" stroke="#444" stroke-width="1.300" fill="none"/></symbol>
<symbol id="chrome" viewBox="0 0 24 24"><circle cx="12" cy="11" r="10.500" fill="#e04030"/><path d="M2 6l6 12 4 3.500c-7 0-11-5-11-10z" fill="#38a04c"/><path d="M12 21.500c6 0 10.500-5 10.500-10.500 0-2-1-4-1-4H12z" fill="#f8c820"/><circle cx="12" cy="11" r="5.500" fill="#fff"/><circle cx="12" cy="11" r="4" fill="#3b7ee0"/><circle cx="11" cy="21" r="3.500" fill="#27ae60"/><path d="M11 19v4M9 21h4" stroke="#fff"/></symbol>
<symbol id="konq" viewBox="0 0 24 24"><circle cx="12" cy="10" r="9" fill="#ddd"/><circle cx="12" cy="10" r="6.500" fill="#2f6fb8"/><path d="M9 6c3-1 5 0 6 3-2 4-5 3-6 0z" fill="#5aa02c"/><circle cx="11" cy="20" r="4" fill="#27ae60"/><path d="M11 18v4M9 20h4" stroke="#fff"/></symbol>
<symbol id="qt" viewBox="0 0 24 24"><path d="M5 1h17v18l-3 3H2V4z" fill="#35b650"/><path d="M9 6h3a4 4 0 0 1 4 5 4 4 0 0 1-4 5H9z" fill="none" stroke="#fff" stroke-width="1.500"/></symbol>
<symbol id="emacs" viewBox="0 0 24 24"><circle cx="12" cy="10.500" r="10" fill="#7a4a9c"/><path d="M8 5c4-1 8 0 8 1-3 0-8 1-7 3 1 1 6 1 6 3s-4 3-6 4c2 0 6-1 6 0" fill="none" stroke="#fff" stroke-width="1.600"/><circle cx="11" cy="20" r="4" fill="#27ae60"/><path d="M11 18v4M9 20h4" stroke="#fff"/></symbol>
<symbol id="git" viewBox="0 0 24 24"><path d="M12 2l10 10-10 10L2 12z" fill="#e85030"/><circle cx="12" cy="8" r="1.500" fill="#fff"/><circle cx="12" cy="16" r="1.500" fill="#fff"/><path d="M12 8v8M12 10l4 2" stroke="#fff"/></symbol>
<symbol id="fedora" viewBox="0 0 24 24"><ellipse cx="12" cy="12" rx="10" ry="12" fill="#3c9ee0"/><path d="M14 6c-2-1-4 0-4 3v7c0 3-3 3-4 2M6 12h8" fill="none" stroke="#fff" stroke-width="1.800"/></symbol>
<symbol id="mixer" viewBox="0 0 24 24"><path d="M3 0h18v24H3z" fill="#31363b"/><path d="M6 8h12M6 16h12" stroke="#eee"/><path d="M13 6h4v4h-4zM7 14h4v4H7z" fill="#3daee9"/></symbol>
<symbol id="tpack" viewBox="0 0 24 24"><path d="M5 5h14v18H5z" fill="#1d8fe0"/><path d="M9 6V2h6v4" fill="none" stroke="#3daee9" stroke-width="1.400"/><path d="M10 11l4 3-4 3" fill="none" stroke="#d0e8f8"/></symbol>
<symbol id="globe" viewBox="0 0 24 24"><circle cx="12" cy="12" r="11" fill="#ccc"/><circle cx="12" cy="12" r="7.500" fill="#2f6fb8"/><path d="M9 7c3-2 6 0 6 3-2 4-5 4-6 1z" fill="#5aa02c"/></symbol>
<symbol id="odoc" viewBox="0 0 24 24"><path d="M4 1h11l5 5v17H4z" fill="#f07a38"/><path d="M8 10h8M8 14h8M8 18h5" stroke="#fbd4b8"/></symbol>
<symbol id="tr1" viewBox="0 0 24 24"><circle cx="12" cy="12" r="10" fill="#eee" stroke="#333" stroke-width="1.400"/><path d="M4 8c4-4 10-6 14-4l2 6-6 2-2 9c-4-2-3-6-5-8z" fill="#2a2a2a"/></symbol>
<symbol id="tr2" viewBox="0 0 24 24"><path d="M12 1l9 6v10l-9 6-9-6V7z" fill="#ec9a30"/><path d="M12 1l9 6v10l-9 6z" fill="#d9662e"/><path d="M12 6l4 6-4 6-4-6z" fill="#f8c850"/></symbol>
<symbol id="tr3" viewBox="0 0 24 24"><path d="M12 1l9 6v10l-9 6-9-6V7z" fill="#ec1e8c"/><path d="M12 1l9 6v10l-9 6z" fill="#1a1a1a"/><path d="M16 10l3-1v6l-3 2z" fill="#f8c820"/></symbol>
<symbol id="tr4" viewBox="0 0 24 24"><circle cx="12" cy="12" r="11" fill="#2a3a2a"/><circle cx="12" cy="12" r="7" fill="#1a8a8a"/><path d="M8 14c2-5 6-6 8-4-1 5-5 6-8 4z" fill="#80b030"/></symbol>
<symbol id="tr5" viewBox="0 0 24 24"><circle cx="12" cy="12" r="9.500" fill="none" stroke="#232629" stroke-width="1.500"/><path d="M12 19V7M8 11l4-4 4 4" fill="none" stroke="#232629" stroke-width="2"/><circle cx="18" cy="20" r="3" fill="#da4453"/></symbol>
<symbol id="tr6" viewBox="0 0 24 24"><path d="M5 4h14v19H5z" fill="none" stroke="#232629" stroke-width="1.500"/><path d="M9 1h6v3H9z" fill="#232629"/><path d="M8 8h8v2H8zM8 12h8v2H8zM8 16h8v2H8z" fill="#232629"/></symbol>
<symbol id="tr7" viewBox="0 0 24 24"><circle cx="12" cy="12" r="9.500" fill="none" stroke="#232629" stroke-width="1.500"/><circle cx="12" cy="12" r="4" fill="#232629"/></symbol>
<symbol id="tr8" viewBox="0 0 24 24"><path d="M3 9h5l6-6v18l-6-6H3z" fill="#232629"/><path d="M17 7c2 3 2 7 0 10" fill="none" stroke="#232629" stroke-width="1.600"/></symbol>
<symbol id="tr9" viewBox="0 0 24 24"><path d="M7 7l10 10-5 5V2l5 5L7 17" fill="none" stroke="#232629" stroke-width="1.500"/></symbol>
<symbol id="tr10" viewBox="0 0 24 24"><path d="M8 5h8v16H8z" fill="#fff" stroke="#232629" stroke-width="1.500"/><path d="M10 1v4M14 1v4" stroke="#232629" stroke-width="1.500"/><circle cx="12" cy="13" r="2.500" fill="#232629"/></symbol>
<symbol id="tr11" viewBox="0 0 24 24"><path d="M9 2h12v14H9zM13 16v5M9 21h8" fill="none" stroke="#232629" stroke-width="1.500"/><path d="M3 5h4v16H3z" fill="#fff" stroke="#232629" stroke-width="1.300"/></symbol>
<symbol id="tr12" viewBox="0 0 24 24"><path d="M5 16l7-8 7 8" fill="none" stroke="#232629" stroke-width="1.300"/></symbol>
<symbol id="mouse" viewBox="0 0 12 24"><rect x="1.500" y="3" width="9" height="18" rx="4.500" fill="none" stroke="#232629" stroke-width="1.300"/><path d="M6 6v4" stroke="#232629" stroke-width="1.300"/></symbol>
</svg>

<div class="app">
  <header class="titlebar">
    <svg class="i logo"><use href="#fc"/></svg>
    <svg class="pin white"><use href="#pin"/></svg>
    <span class="ttl">FreeCAD 0.20.2</span>
    <span class="wbtns">
      <svg class="wb"><use href="#chev" class="whitestroke"/></svg>
      <svg class="wb white"><use href="#dia"/></svg>
      <svg class="wb white"><use href="#cls"/></svg>
    </span>
  </header>
  <nav class="menubar"><span>File</span><span>Edit</span><span>View</span><span>Tools</span><span>Macro</span><span>GDML</span><span>Windows</span><span>Help</span></nav>

  <div class="tb tb1">
    <span class="h h1"><i></i></span>
    <span class="b"><svg class="i"><use href="#new"/></svg></span>
    <span class="b"><svg class="i"><use href="#open"/></svg></span>
    <span class="b"><svg class="i"><use href="#save"/></svg></span>
    <span class="b"><svg class="i"><use href="#print"/></svg></span>
    <span class="s"></span>
    <span class="b"><svg class="i"><use href="#cut"/></svg></span>
    <span class="b"><svg class="i"><use href="#copy"/></svg></span>
    <span class="b"><svg class="i"><use href="#paste"/></svg></span>
    <span class="s"></span>
    <span class="b"><svg class="i"><use href="#undo"/></svg></span>
    <span class="c"><svg class="ch"><use href="#chev"/></svg></span>
    <span class="b"><svg class="i"><use href="#redo"/></svg></span>
    <span class="c dim"><svg class="ch"><use href="#chev"/></svg></span>
    <span class="s"></span>
    <span class="b"><svg class="i"><use href="#macro"/></svg></span>
    <span class="c"><svg class="ch"><use href="#chev"/></svg></span>
    <span class="s"></span>
    <span class="b"><svg class="i"><use href="#refresh"/></svg></span>
    <span class="s"></span>
    <span class="b"><svg class="i"><use href="#what"/></svg></span>
    <span class="h h2"><i></i></span>
    <span class="combo"><svg class="i16"><use href="#gdml"/></svg><span class="combo-t">GDML</span><svg class="ch"><use href="#chev"/></svg></span>
    <span class="h h3"><i></i></span>
    <span class="b"><svg class="i"><use href="#rec"/></svg></span>
    <span class="b"><svg class="i"><use href="#stop"/></svg></span>
    <span class="b"><svg class="i"><use href="#page"/></svg></span>
    <span class="b"><svg class="i"><use href="#play"/></svg></span>
  </div>

  <div class="tb tb2">
    <span class="h h1"><i></i></span>
    <span class="b"><svg class="i"><use href="#fit"/></svg></span>
    <span class="b"><svg class="i"><use href="#fits"/></svg></span>
    <span class="b"><svg class="i"><use href="#nope"/></svg></span>
    <span class="c"><svg class="ch"><use href="#chev"/></svg></span>
    <span class="b"><svg class="i"><use href="#boxsel"/></svg></span>
    <span class="s"></span>
    <span class="b"><svg class="i"><use href="#aleft"/></svg></span>
    <span class="b"><svg class="i"><use href="#aright"/></svg></span>
    <span class="b"><svg class="i"><use href="#bluebox"/></svg></span>
    <span class="c"><svg class="ch"><use href="#chev"/></svg></span>
    <span class="s"></span>
    <span class="b"><svg class="i"><use href="#zoom"/></svg></span>
    <span class="c"><svg class="ch"><use href="#chev"/></svg></span>
    <span class="b"><svg class="i"><use href="#iso"/></svg></span>
    <span class="s"></span>
    <span class="b"><svg class="i"><use href="#vf"/></svg></span>
    <span class="b"><svg class="i"><use href="#vt"/></svg></span>
    <span class="b"><svg class="i"><use href="#vr"/></svg></span>
    <span class="s"></span>
    <span class="b"><svg class="i"><use href="#vb"/></svg></span>
    <span class="b"><svg class="i"><use href="#vb2"/></svg></span>
    <span class="b"><svg class="i"><use href="#vr"/></svg></span>
    <span class="s"></span>
    <span class="b"><svg class="i"><use href="#ruler"/></svg></span>
    <span class="h h4"><i></i></span>
    <span class="b"><svg class="i c-y"><use href="#part"/></svg></span>
    <span class="b"><svg class="i"><use href="#folderb"/></svg></span>
    <span class="b"><svg class="i"><use href="#grpin"/></svg></span>
    <span class="b"><svg class="i"><use href="#grpout"/></svg></span>
    <span class="c"><svg class="ch"><use href="#chev"/></svg></span>
    <span class="h h5"><i></i></span>
    <span class="b"><svg class="i"><use href="#recyc"/></svg></span>
    <span class="b"><svg class="i"><use href="#hexgd"/></svg></span>
    <span class="b"><svg class="i"><use href="#tree1"/></svg></span>
    <span class="b"><svg class="i"><use href="#tree2"/></svg></span>
    <span class="b"><svg class="i"><use href="#dotsel"/></svg></span>
    <span class="b"><svg class="i"><use href="#holes"/></svg></span>
    <span class="b"><svg class="i"><use href="#rayd"/></svg></span>
    <span class="b"><svg class="i"><use href="#wavy"/></svg></span>
    <span class="b"><svg class="i"><use href="#stripes"/></svg></span>
    <span class="s"></span>
    <span class="b"><svg class="i"><use href="#ppart"/></svg></span>
    <span class="b"><svg class="i"><use href="#pbox"/></svg></span>
    <span class="b"><svg class="i"><use href="#ptwist"/></svg></span>
    <span class="b"><svg class="i"><use href="#pcyl"/></svg></span>
    <span class="b"><svg class="i"><use href="#pcone"/></svg></span>
    <span class="b"><svg class="i"><use href="#psph"/></svg></span>
    <span class="b"><svg class="i"><use href="#ptor"/></svg></span>
    <span class="b"><svg class="i"><use href="#pwedge"/></svg></span>
    <span class="b"><svg class="i"><use href="#ptube"/></svg></span>
    <span class="b"><svg class="i"><use href="#sketch"/></svg></span>
    <span class="b"><svg class="i"><use href="#extr"/></svg></span>
    <span class="b"><svg class="i"><use href="#revo"/></svg></span>
    <span class="b"><svg class="i"><use href="#mirror"/></svg></span>
    <span class="b"><svg class="i"><use href="#stack"/></svg></span>
    <span class="c"><svg class="ch"><use href="#chev"/></svg></span>
    <span class="b"><svg class="i"><use href="#scale"/></svg></span>
    <span class="s"></span>
    <span class="b"><svg class="i"><use href="#bfuse"/></svg></span>
    <span class="b"><svg class="i"><use href="#bcom"/></svg></span>
    <span class="b"><svg class="i"><use href="#bun"/></svg></span>
    <span class="s"></span>
    <span class="b"><svg class="i"><use href="#bp"/></svg></span>
    <span class="b"><svg class="i"><use href="#xx"/></svg></span>
    <span class="c"><svg class="ch"><use href="#chev"/></svg></span>
    <span class="b"><svg class="i"><use href="#slice"/></svg></span>
    <span class="b"><svg class="i"><use href="#bgp"/></svg></span>
    <span class="b"><svg class="i"><use href="#gmesh"/></svg></span>
    <span class="b"><svg class="i"><use href="#xx"/></svg></span>
    <span class="c"><svg class="ch"><use href="#chev"/></svg></span>
    <span class="b"><svg class="i"><use href="#brkd"/></svg></span>
    <span class="b"><svg class="i"><use href="#xx"/></svg></span>
    <span class="b"><svg class="i"><use href="#brkb"/></svg></span>
    <span class="h h6"><i></i></span>
    <span class="b on"><svg class="i"><use href="#lock"/></svg></span>
    <span class="b"><svg class="i"><use href="#tl1"/></svg></span>
    <span class="b"><svg class="i"><use href="#tl2"/></svg></span>
    <span class="b"><svg class="i"><use href="#tl3"/></svg></span>
    <span class="b"><svg class="i"><use href="#tl4"/></svg></span>
    <span class="b"><svg class="i"><use href="#tl5"/></svg></span>
    <span class="b"><svg class="i"><use href="#tl6"/></svg></span>
    <span class="b"><svg class="i"><use href="#tl7"/></svg></span>
    <span class="c"><svg class="chs"><use href="#chr"/></svg></span>
  </div>

  <div class="main">
    <aside class="combo-dock">
      <div class="dock-title"><span>Combo View</span><span class="dock-btns"><svg class="db"><use href="#dia"/></svg><svg class="db"><use href="#cls"/></svg></span></div>
      <div class="tabs"><span class="tab sel m1">Model</span><span class="tab m2">Tasks</span></div>
      <div class="combo-body">
        <div class="model-tree">
          <div class="hdr"><span class="hc hc1">Labels &amp; Attributes</span><span class="hc hc2">Description</span></div>
          <div class="row d0"><span class="br t"></span><span class="rc"><svg class="i16"><use href="#fold"/></svg><span>Isotopes</span></span></div>
          <div class="row d0"><span class="br t"></span><span class="rc"><svg class="i16"><use href="#fold"/></svg><span>Elements</span></span></div>
          <div class="row d0"><span class="br t"><svg class="ex"><use href="#chr"/></svg></span><span class="rc"><svg class="i16"><use href="#fold"/></svg><span>Materials</span></span></div>
          <div class="row d0"><span class="br t"><svg class="ex"><use href="#chr"/></svg></span><span class="rc"><svg class="i16"><use href="#fold"/></svg><span>Opticals</span></span></div>
          <div class="row d0"><span class="br n"><svg class="ex"><use href="#chd"/></svg></span><span class="rc sel"><svg class="i16 c-g"><use href="#part"/></svg><span>worldVOL</span></span></div>
          <div class="row d1"><span class="br t"><svg class="ex"><use href="#chr"/></svg></span><span class="rc gray"><svg class="i16"><use href="#axes"/></svg><span>Origin</span></span></div>
          <div class="row d1"><span class="br t"></span><span class="rc"><svg class="i16"><use href="#gbox"/></svg><span>GDMLBox_WorldBox</span></span></div>
          <div class="row d1"><span class="br n"><svg class="ex"><use href="#chd"/></svg></span><span class="rc bold"><svg class="i16 c-y"><use href="#part"/></svg><span>Part001</span></span></div>
          <div class="row d2"><span class="br t"><svg class="ex"><use href="#chr"/></svg></span><span class="rc gray"><svg class="i16"><use href="#axes"/></svg><span>Origin004</span></span></div>
          <div class="row d2"><span class="br n"><svg class="ex"><use href="#chd"/></svg></span><span class="rc"><svg class="i16"><use href="#arr"/></svg><span>Array</span></span></div>
          <div class="row d3"><span class="br n"><svg class="ex"><use href="#chd"/></svg></span><span class="rc gray"><svg class="i16 c-d"><use href="#part"/></svg><span>Part</span></span></div>
          <div class="row d4"><span class="br t"><svg class="ex"><use href="#chr"/></svg></span><span class="rc gray"><svg class="i16"><use href="#axes"/></svg><span>Origin003</span></span></div>
          <div class="row d4"><span class="br t"><svg class="ex"><use href="#chr"/></svg></span><span class="rc"><svg class="i16 c-y"><use href="#part"/></svg><span>LV_Box</span></span></div>
          <div class="row d4"><span class="br l"><svg class="ex"><use href="#chr"/></svg></span><span class="rc"><svg class="i16 c-y"><use href="#part"/></svg><span>LV_Torus</span></span></div>
        </div>
        <div class="prop">
          <div class="prop-h">Property</div>
          <div class="prop-base">Base</div>
          <div class="pr"><span class="br t"></span><span class="pc alt">Type</span></div>
          <div class="pr"><span class="br t"></span><span class="pc">Id</span></div>
          <div class="pr"><span class="br t"></span><span class="pc alt">License</span></div>
          <div class="pr"><span class="br t"></span><span class="pc">License URL</span></div>
          <div class="pr"><span class="br t"></span><span class="pc alt">Color</span></div>
          <div class="pr"><span class="br t"><svg class="ex"><use href="#chd"/></svg></span><span class="pc">Placement</span></div>
          <div class="pr"><span class="br v"></span><span class="br t"></span><span class="pc alt">Angle</span></div>
          <div class="pr"><span class="br v"></span><span class="br t"><svg class="ex"><use href="#chr"/></svg></span><span class="pc">Axis</span></div>
          <div class="pr"><span class="br v"></span><span class="br n"><svg class="ex"><use href="#chd"/></svg></span><span class="pc alt">Position</span></div>
          <div class="pr"><span class="br v"></span><span class="br e"></span><span class="br t"></span><span class="pc sel">x</span></div>
          <div class="pr"><span class="br v"></span><span class="br e"></span><span class="br t"></span><span class="pc alt">y</span></div>
          <div class="pr"><span class="br v"></span><span class="br e"></span><span class="br l"></span><span class="pc">z</span></div>
          <div class="pr"><span class="br t"></span><span class="pc alt">Label</span></div>
          <div class="pr"><span class="br l"></span><span class="pc">Group</span></div>
        </div>
        <div class="btabs"><span class="btab">View</span><span class="btab sel">Data</span></div>
      </div>
    </aside>
    <div class="viewport">
      <svg class="scene" viewBox="607 153 1953 947" preserveAspectRatio="none">
        <path d="M607 153H2560V1100H607z" fill="url(#grid)"/>
        <path d="M1861.500 153V1100" stroke="#0a9a14" stroke-width="1.500"/>
        <path d="M607 685.500H2560" stroke="#8c1020"/>
        <path d="M1572.500 397H2150V973H1572.500z" fill="none" stroke="#1fb02c" stroke-width="2"/>
        <path d="M1571 395h4v4h-4zM2148 395h4v4h-4zM1571 971h4v4h-4zM2148 971h4v4h-4z" fill="#1fb02c"/>
        <path d="M1833 483h58v58h-58zM1660 656h57v58h-57zM2006 656h58v58h-58zM1739 522.500l40.500 40.500-40.500 40.500-40.500-40.500zM1984 522.500l40.500 40.500-40.500 40.500-40.500-40.500z" fill="#a6ffa0"/>
        <use href="#capsule" transform="translate(1862 460)"/>
        <use href="#capsule" transform="translate(1636.500 685) rotate(90)"/>
        <use href="#capsule" transform="translate(2086.500 685) rotate(90)"/>
        <use href="#capsule" transform="translate(1702.500 526) rotate(-45)"/>
        <use href="#capsule" transform="translate(2021 526.500) rotate(45)"/>
        <g fill="#8d90ae">
          <path d="M2487 161l11 11h-22zM2422 226l11-12v24zM2552 226l-11-12v24zM2487 289l-11-11h22z"/>
          <path d="M2439 195c2-14 13-25 24-28l3 5c-9 4-15 13-18 24l3 0-10 6-2-12zM2534 195c-2-14-13-25-24-28l-3 5c9 4 15 13 18 24l-3 0 10 6 2-12z"/>
          <ellipse cx="2547" cy="166" rx="6" ry="6"/>
          <path d="M2512 270l8-3 8 3v13l-8 4-8-4z"/>
          <path d="M2534 274h11l-5 6z" fill="#5a5c80"/>
        </g>
        <path d="M2461 195h52l5 5v52l-5 5h-52l-5-5v-52z" fill="#9a9db8"/>
        <path d="M2461 200h52v52h-52z" fill="#b9bccd" stroke="#26283c"/>
        <text x="2487" y="230" class="navtxt" text-anchor="middle" textLength="20" lengthAdjust="spacingAndGlyphs">TOP</text>
        <path d="M2463 215v35" stroke="#a8f0a0" stroke-width="1.500"/>
        <path d="M2463 250h35" stroke="#f0a0a0" stroke-width="1.500"/>
        <path d="M2460 252l-5 6" stroke="#1020e0" stroke-width="1.500"/>
        <path d="M2516 1053l28-7" stroke="#d01818" stroke-width="1.500"/>
        <path d="M2516 1053v-26" stroke="#18b018" stroke-width="1.500"/>
        <circle cx="2516" cy="1053" r="2.500" fill="#1818e0"/>
        <text x="2513" y="1021" class="axtxt">y</text><text x="2548" y="1051" class="axtxt">x</text>
      </svg>
    </div>
  </div>

  <div class="rtabs"><span class="rtab">Report view</span><span class="rtab sel">Combo View</span></div>
  <section class="py-dock">
    <div class="py-title"><span>Python console</span><span class="dock-btns"><svg class="db"><use href="#dia"/></svg><svg class="db"><use href="#cls"/></svg></span></div>
    <div class="console">
      <div class="cl"><span class="pm">&gt;&gt;&gt; </span><span class="cm">### End command Std_Save</span></div>
      <div class="cl"><span class="pm">&gt;&gt;&gt; </span><span class="cm"># Gui.Selection.clearSelection()</span></div>
      <div class="cl"><span class="pm">&gt;&gt;&gt; </span><span class="cm"># Gui.Selection.addSelection()</span></div>
      <div class="cl"><span class="pm">&gt;&gt;&gt; </span><span class="cm">### Begin command Std_Export</span></div>
      <div class="cl"><span class="pm">&gt;&gt;&gt; </span>__objs__<span class="op">=[]</span></div>
      <div class="cl"><span class="pm">&gt;&gt;&gt; </span>__objs__<span class="op">.</span>append<span class="op">(</span>FreeCAD<span class="op">.</span>getDocument()</div>
      <div class="cl"><span class="pm">&gt;&gt;&gt; </span><span class="kw">import</span> freecad<span class="op">.</span>gdml<span class="op">.</span>exportGDML</div>
      <div class="cl"><span class="pm">&gt;&gt;&gt; </span>freecad<span class="op">.</span>gdml<span class="op">.</span>exportGDML<span class="op">.</span>export<span class="op">(</span>__objs__<span class="op">,</span>u<span class="str">"/home/hindi/geant/KeithSloan/KeithArrayTests-2023/polarArray-6-worldVOL.gdml"</span><span class="op">)</span></div>
      <div class="cl"><span class="pm">&gt;&gt;&gt; </span></div>
      <div class="cl"><span class="pm">&gt;&gt;&gt; </span><span class="kw">del</span> __objs__</div>
      <div class="cl"><span class="pm">&gt;&gt;&gt; </span><span class="cm">### End command Std_Export</span></div>
      <div class="cl"><span class="pm">&gt;&gt;&gt; </span></div>
      <span class="thumb cons-thumb"></span>
    </div>
  </section>
  <div class="status">
    <svg class="mouse"><use href="#mouse"/></svg><span class="st-cad">CAD</span><svg class="ch st-ch"><use href="#chev"/></svg><span>338.54 mm x 164.33 mm</span>
  </div>

  <footer class="taskbar">
    <div class="launch">
      <svg class="li"><use href="#fedora"/></svg><svg class="li"><use href="#mixer"/></svg><svg class="li"><use href="#tpack"/></svg><svg class="li"><use href="#globe"/></svg>
    </div>
    <div class="task run"><svg class="ti"><use href="#calc"/></svg><span>grpn</span></div>
    <div class="task run"><svg class="ti"><use href="#konsole"/></svg><span>Konsole</span></div>
    <div class="task run"><svg class="ti"><use href="#chrome"/></svg><span>Google Chrome</span></div>
    <div class="task run"><svg class="ti"><use href="#konq"/></svg><span>Konqueror</span></div>
    <div class="task"><svg class="ti"><use href="#qt"/></svg><span>Qt Designer</span></div>
    <div class="task run"><svg class="ti"><use href="#emacs"/></svg><span>Emacs</span></div>
    <div class="task"><svg class="ti"><use href="#git"/></svg><span>GDML.hindi: array...</span></div>
    <div class="task act"><svg class="ti"><use href="#fc"/></svg><span>FreeCAD 0.20.2</span></div>
    <div class="task run last"><svg class="ti"><use href="#xapp"/></svg><span>load_gdml_color</span></div>
    <div class="cpu"><span>5.2%</span></div>
    <div class="pager">
      <span class="desk act">Des...</span><span class="desk">Des...</span><span class="desk w1">Andr...</span><span class="desk act">CAD</span><span class="desk w2">Des...</span><span class="desk w1">Goo...</span><span class="desk w1">Hiking</span><span class="desk">HOA</span><span class="desk w3">Proj...</span><span class="desk w2">TVR...</span>
    </div>
    <div class="tray-doc"><svg class="ti"><use href="#odoc"/></svg><span>CAD</span></div>
    <div class="tray">
      <svg class="tri"><use href="#tr1"/></svg><svg class="tri"><use href="#tr2"/></svg><svg class="tri"><use href="#tr3"/></svg><svg class="tri"><use href="#tr4"/></svg><svg class="tri"><use href="#tr5"/></svg><svg class="tri"><use href="#tr6"/></svg><svg class="tri"><use href="#tr7"/></svg><svg class="tri"><use href="#tr8"/></svg><svg class="tri"><use href="#tr9"/></svg><svg class="tri"><use href="#tr10"/></svg><svg class="tri"><use href="#tr11"/></svg><svg class="tri"><use href="#tr12"/></svg>
    </div>
    <div class="clock"><span>10:26 AM</span><span>3/26/23</span></div>
  </footer>
</div>

<div class="win">
  <div class="win-title">
    <svg class="i16 win-x"><use href="#xapp"/></svg>
    <svg class="win-pin"><use href="#pin"/></svg>
    <span class="win-ttl">load_gdml_color</span>
    <span class="win-btns"><svg class="db faint"><use href="#chev"/></svg><svg class="db faint"><use href="#chu"/></svg><svg class="db"><use href="#cls"/></svg></span>
  </div>
  <div class="win-tb">
    <span class="h hw"><i></i></span>
    <span class="wt"><svg class="i"><use href="#fopen"/></svg></span>
    <span class="wt"><svg class="i"><use href="#fsave"/></svg></span>
    <span class="wt"><svg class="i"><use href="#gear"/></svg></span>
    <span class="wt"><svg class="i"><use href="#move"/></svg></span>
    <span class="wt"><svg class="i"><use href="#target"/></svg></span>
    <span class="wt"><svg class="i"><use href="#zout"/></svg></span>
    <span class="wt"><svg class="i"><use href="#zin"/></svg></span>
    <span class="wt on"><svg class="i"><use href="#rot"/></svg></span>
    <span class="wt"><svg class="i"><use href="#wh"/></svg></span>
    <span class="wt on"><svg class="i"><use href="#bh"/></svg></span>
    <span class="wt"><svg class="i"><use href="#bs"/></svg></span>
    <span class="wt"><svg class="i"><use href="#wc"/></svg></span>
    <span class="wt"><svg class="i"><use href="#wc2"/></svg></span>
    <span class="wt on"><svg class="i"><use href="#wc2"/></svg></span>
    <span class="wt"><svg class="i"><use href="#gplay"/></svg></span>
  </div>
  <div class="win-body">
    <div class="scene-dock">
      <div class="dock-title st"><span>Scene tree, Help, History</span><span class="dock-btns"><svg class="db"><use href="#dia"/></svg><svg class="db"><use href="#cls"/></svg></span></div>
      <div class="tabs st"><span class="tab t1">Scene tree</span><span class="tab sel inact t2">Help</span><span class="tab t3">History</span></div>
      <div class="help-panel">
        <div class="search"><span class="search-l">Search :</span><span class="inp"></span></div>
        <div class="cmd">
          <div class="cmd-h">Command</div>
          <div class="cr"><span class="br t"><svg class="ex"><use href="#chr"/></svg></span><span>control</span></div>
          <div class="cr"><span class="br t"><svg class="ex"><use href="#chr"/></svg></span><span>units</span></div>
          <div class="cr"><span class="br t"><svg class="ex"><use href="#chr"/></svg></span><span>profiler</span></div>
          <div class="cr"><span class="br t"><svg class="ex"><use href="#chr"/></svg></span><span>persistency</span></div>
          <div class="cr"><span class="br t"><svg class="ex"><use href="#chr"/></svg></span><span>material</span></div>
          <div class="cr"><span class="br t"><svg class="ex"><use href="#chr"/></svg></span><span>particle</span></div>
          <div class="cr"><span class="br t"><svg class="ex"><use href="#chr"/></svg></span><span>geometry</span></div>
          <div class="cr"><span class="br t"><svg class="ex"><use href="#chr"/></svg></span><span>tracking</span></div>
          <div class="cr"><span class="br t"><svg class="ex"><use href="#chr"/></svg></span><span>event</span></div>
          <div class="cr"><span class="br t"><svg class="ex"><use href="#chr"/></svg></span><span>cuts</span></div>
          <div class="cr"><span class="br t"><svg class="ex"><use href="#chr"/></svg></span><span>run</span></div>
          <div class="cr"><span class="br t"><svg class="ex"><use href="#chr"/></svg></span><span>random</span></div>
          <div class="cr"><span class="br t"><svg class="ex"><use href="#chr"/></svg></span><span>process</span></div>
          <div class="cr"><span class="br t"><svg class="ex"><use href="#chr"/></svg></span><span>physics_lists</span></div>
          <div class="cr"><span class="br t"><svg class="ex"><use href="#chr"/></svg></span><span>gps</span></div>
          <div class="cr"><span class="br t"><svg class="ex"><use href="#chr"/></svg></span><span>heptst</span></div>
          <div class="cr"><span class="br t"><svg class="ex"><use href="#chr"/></svg></span><span>physics_engine</span></div>
          <div class="cr"><span class="br t"><svg class="ex"><use href="#chr"/></svg></span><span>vis</span></div>
          <div class="cr"><span class="br l"><svg class="ex"><use href="#chr"/></svg></span><span>gui</span></div>
        </div>
      </div>
    </div>
    <div class="view-col">
      <div class="vtabs"><span class="vtab v1">Useful tips<svg class="db"><use href="#cls"/></svg></span><span class="vtab sel v2">viewer-0 (OpenGLImmediateQt)<svg class="db"><use href="#cls"/></svg></span></div>
      <div class="black"></div>
      <div class="output">
        <div class="dock-title ot"><span>Output</span><span class="dock-btns"><svg class="db"><use href="#dia"/></svg><svg class="db"><use href="#cls"/></svg></span></div>
        <div class="filter"><span class="finp"><svg class="mag"><use href="#mag"/></svg></span><svg class="oi"><use href="#trash"/></svg><svg class="oi"><use href="#fsave"/></svg></div>
        <div class="log">
          <div class="ll">The scene has no extent.</div>
          <div class="ll">*** This is just a warning message. ***</div>
          <div class="ll">-------- WWWW -------- G4Exception-END --------- WWWW -------</div>
          <div class="ll gap"></div>
          <div class="ll">-------- WWWW ------- G4Exception-START -------- WWWW -------</div>
          <div class="ll">*** G4Exception : visman0106</div>
          <div class="ll">      issued by : G4VSceneHandler::ProcessScene</div>
          <div class="ll">The scene has no extent.</div>
          <div class="ll">*** This is just a warning message. ***</div>
          <div class="ll">-------- WWWW -------- G4Exception-END --------- WWWW -------</div>
          <span class="thumb log-thumb"></span>
        </div>
        <div class="session"><span class="session-l">Session :</span><span class="inp"></span></div>
      </div>
    </div>
  </div>
</div>
</body>
</html>
```
FILE: styles.css
```css
* { box-sizing: border-box; }
html, body { margin: 0; padding: 0; }
body { width: 2560px; height: 1440px; overflow: hidden; position: relative; font: 13px/1.2 "Noto Sans", sans-serif; color: #232629; background: #eff0f1; }
.defs { position: absolute; width: 0; height: 0; }
.app { display: flex; flex-direction: column; width: 2560px; height: 1440px; }
.i { width: 24px; height: 24px; display: block; flex: none; }
.i16 { width: 18px; height: 18px; display: block; flex: none; }
.c-y { color: #e8cf20; } .c-g { color: #a9cf7a; } .c-d { color: #c4c6c8; }
.white { color: #fcfcfc; }

.titlebar { height: 29px; background: #474e55; display: flex; align-items: center; position: relative; flex: none; }
.logo { margin-left: 2px; }
.pin { width: 14px; height: 14px; margin-left: 5px; }
.ttl { position: absolute; left: 0; right: 0; top: 7px; text-align: center; color: #eff0f1; pointer-events: none; }
.wbtns { margin-left: auto; display: flex; gap: 12px; padding-right: 8px; }
.wb { width: 12px; height: 12px; display: block; }
.whitestroke { filter: brightness(0) invert(1); }

.menubar { height: 30px; flex: none; display: flex; align-items: center; padding: 1px 0 0 10px; gap: 20.7px; }

.tb { display: flex; align-items: center; flex: none; }
.tb1 { height: 47px; }
.tb2 { height: 47px; }
.b { width: 35px; height: 33px; display: flex; align-items: center; justify-content: center; flex: none; border-radius: 3px; }
.b.on { background: #d2d4d6; border: 1px solid #b4b7ba; }
.c { width: 20px; display: flex; justify-content: center; flex: none; }
.c.dim { opacity: .35; }
.ch { width: 11px; height: 11px; display: block; }
.chs { width: 12px; height: 22px; display: block; }
.s { width: 8px; height: 35px; flex: none; position: relative; }
.s::before { content: ""; position: absolute; left: 5px; top: 0; bottom: 0; border-left: 1px solid #babdc0; }
.h { display: flex; align-items: center; flex: none; height: 35px; }
.h i { display: block; width: 4px; height: 35px; border-left: 1px solid #b8bbbe; border-right: 1px solid #b8bbbe; }
.h1 { width: 15.5px; padding-left: 9px; }
.h2 { width: 20.5px; padding-left: 15px; }
.h3 { width: 22.5px; padding-left: 16px; }
.h4 { width: 23px; padding-left: 15px; }
.h5 { width: 21px; padding-left: 14px; }
.h6 { width: 22.5px; padding-left: 15px; }
.combo { width: 217.5px; height: 30px; margin-left: 3.5px; flex: none; border: 1px solid #bdc0c3; border-radius: 4px; background: #eff0f1; box-shadow: 0 1px 1px rgba(0,0,0,.08); display: flex; align-items: center; padding: 0 6px; }
.combo-t { margin-left: 3px; flex: 1; }

.main { display: flex; flex: none; height: 947px; }
.combo-dock { width: 607px; flex: none; display: flex; flex-direction: column; padding: 1px 0 3px 0; }
.dock-title { display: flex; align-items: center; justify-content: space-between; flex: none; height: 29px; padding: 0 6px 1px 4px; background: #f4f6f6; border: 1px solid #d5d7d9; border-bottom: 0; border-radius: 3px 3px 0 0; margin: 0 2px; }
.dock-btns { display: flex; gap: 13px; color: #808488; }
.db { width: 11px; height: 11px; display: block; color: #808488; }
.faint { opacity: .55; }
.tabs { display: flex; height: 30px; flex: none; background: #f4f6f6; margin: 0 2px; padding-left: 1px; }
.tab { background: #c6c8ca; display: flex; align-items: center; justify-content: center; border-radius: 3px 3px 0 0; flex: none; padding-bottom: 1px; }
.tab.sel { background: #f4f6f6; border-top: 3px solid #3daee9; padding-bottom: 3px; }
.tab.sel.inact { border-top-color: #b6dcf3; }
.m1, .m2 { width: 80px; }
.combo-body { flex: 1; background: #f4f6f6; border: 1px solid #c4c7c9; border-radius: 3px; margin: 0 2px; padding: 3px 3px 3px 3px; display: flex; flex-direction: column; }
.model-tree { height: 396px; background: #fcfcfc; border: 1px solid #c4c7c9; border-radius: 3px; flex: none; width: 595px; }
.hdr { display: flex; height: 31px; background: #eff0f1; border-bottom: 1px solid #cdcfd1; width: 570px; }
.hc { display: flex; align-items: center; padding-left: 7px; border-right: 1px solid #cdcfd1; }
.hc1 { width: 220px; } .hc2 { width: 101px; }
.row { display: flex; height: 26px; align-items: stretch; }
.d0 { padding-left: 20px; } .d1 { padding-left: 40px; } .d2 { padding-left: 60px; } .d3 { padding-left: 80px; } .d4 { padding-left: 100px; }
.br { width: 20px; flex: none; position: relative; display: block; }
.br::before { content: ""; position: absolute; left: 10px; top: 0; bottom: 0; border-left: 1px solid #c6c8ca; }
.br::after { content: ""; position: absolute; left: 10px; right: 0; top: 50%; border-top: 1px solid #c6c8ca; }
.br.l::before { bottom: 50%; }
.br.n::before { display: none; }
.br.v::after { display: none; }
.br.e::before, .br.e::after { display: none; }
.ex { position: absolute; left: 4px; top: 50%; margin-top: -6px; width: 12px; height: 12px; z-index: 1; }
.rc { display: flex; align-items: center; gap: 5px; flex: 1; padding-left: 2px; min-width: 0; }
.rc.sel { background: #bddcf2; }
.gray { color: #a9acaf; }
.bold { font-weight: 700; }

.prop { margin: 9px 0 0 5px; height: 439px; width: 588px; border: 1px solid #c4c7c9; border-radius: 3px; background: #fcfcfc; flex: none; }
.prop-h { height: 30px; background: #eff0f1; border-bottom: 1px solid #cdcfd1; display: flex; align-items: center; padding-left: 6px; }
.prop-base { height: 22px; background: #888c90; color: #fcfcfc; font-weight: 700; display: flex; align-items: center; padding-left: 3px; }
.pr { display: flex; height: 23px; }
.pc { flex: 1; display: flex; align-items: center; padding-left: 3px; border-bottom: 1px solid #c8cacc; }
.pc.alt { background: #eff0f1; }
.pc.sel { background: #bddcf2; }
.btabs { display: flex; margin-top: 3px; height: 30px; flex: none; }
.btab { width: 81px; background: #c6c8ca; display: flex; align-items: center; justify-content: center; border-radius: 0 0 3px 3px; }
.btab.sel { width: 78px; background: #f4f6f6; border-bottom: 3px solid #3daee9; border-right: 1px solid #c4c7c9; border-radius: 0; padding-top: 3px; }

.viewport { flex: 1; background: linear-gradient(#322e60, #9595ae); position: relative; }
.scene { display: block; width: 100%; height: 100%; }
.navtxt { font: 700 16px "Liberation Sans", sans-serif; fill: #111; }
.axtxt { font: 10px "Liberation Sans", sans-serif; fill: #111; }

.rtabs { display: flex; height: 33px; flex: none; padding-bottom: 3px; }
.rtab { width: 90px; background: #c6c8ca; display: flex; align-items: center; justify-content: center; padding-top: 3px; }
.rtab.sel { width: 91px; background: #f4f6f6; border-bottom: 3px solid #3daee9; border-right: 1px solid #c4c7c9; padding-top: 6px; }
.py-dock { height: 234px; flex: none; margin: 0 1px; border: 1px solid #d5d7d9; background: #f4f6f6; border-radius: 3px; display: flex; flex-direction: column; }
.py-title { height: 29px; flex: none; display: flex; justify-content: space-between; align-items: center; padding: 0 7px 2px 4px; }
.console { flex: 1; margin: 0 1px 0 2px; background: #fcfcfc; border: 1px solid #c4c7c9; border-radius: 3px; padding: 0 0 0 5px; font: 13px/16.2px "Liberation Mono", monospace; position: relative; overflow: hidden; }
.cl { white-space: pre; height: 16.2px; }
.pm { color: #a0a3a6; }
.cm { color: #00b400; }
.kw { color: #0000ff; font-weight: 700; }
.str { color: #e00000; }
.op { color: #a0a3a6; }
.thumb { position: absolute; width: 7px; background: #b4b7ba; border-radius: 4px; }
.cons-thumb { right: 6px; top: 172px; height: 24px; }
.status { height: 41px; flex: none; display: flex; justify-content: flex-end; align-items: center; padding: 2px 3px 0 0; }
.mouse { width: 12px; height: 22px; }
.st-cad { margin-left: 7.5px; width: 44.5px; }
.st-ch { margin-right: 12.5px; }

.taskbar { height: 32px; flex: none; display: flex; align-items: stretch; background: #eff0f1; border-top: 1px solid #e4e5e6; }
.launch { width: 129px; display: flex; align-items: center; padding-left: 4px; flex: none; }
.li { width: 24px; height: 24px; margin-right: 8.3px; display: block; flex: none; }
.task { width: 161px; flex: none; display: flex; align-items: center; padding-left: 4px; gap: 6px; background: linear-gradient(#dcdde0, #cdcfd1); white-space: nowrap; border-right: 1px solid #eff0f1; }
.task.run { border-top: 3px solid #a9abad; padding-bottom: 3px; }
.task.act { background: #a3d5f0; border-top: 3px solid #3daee9; padding-bottom: 3px; }
.task.last { margin-left: 10px; width: 159px; }
.ti { width: 22px; height: 24px; display: block; flex: none; }
.cpu { width: 24px; height: 28px; margin: 2px 8px 0 21px; flex: none; border-radius: 50%; border: 5px solid #c4c7ca; border-top-color: #5a9ed0; display: flex; align-items: center; justify-content: center; font-size: 10px; }
.cpu span { white-space: nowrap; }
.pager { display: flex; align-items: center; flex: none; }
.desk { width: 42.2px; height: 25px; background: #d9dadb; display: flex; align-items: center; justify-content: center; white-space: nowrap; border-right: 1px solid #eff0f1; overflow: hidden; }
.desk.act { background: #3f86b0; border-bottom: 1px solid #3daee9; }
.desk.w1 { background: linear-gradient(90deg,#d9dadb 20%,#b0b1b2 20%,#b0b1b2 78%,#d9dadb 78%); }
.desk.w2 { background: linear-gradient(90deg,#c0c1c2 10%,#8e8f90 10%,#8e8f90 75%,#d0d1d2 75%); }
.desk.w3 { background: #555657; }
.tray-doc { display: flex; align-items: center; margin-left: 12px; gap: 5px; flex: none; width: 64px; }
.tray { display: flex; align-items: center; gap: 5.7px; flex: none; }
.tri { width: 24px; height: 24px; display: block; flex: none; }
.clock { margin-left: auto; padding: 2px 5px 0 0; display: flex; flex-direction: column; align-items: center; justify-content: center; line-height: 13px; font-size: 13px; white-space: nowrap; }

.win { position: absolute; left: 218px; top: 257px; width: 1308px; height: 1013px; background: #eff0f1; border: 1px solid #9a9da0; border-radius: 4px 4px 0 0; box-shadow: 0 6px 32px rgba(0,0,0,.5); display: flex; flex-direction: column; }
.win-title { height: 27px; flex: none; display: flex; align-items: center; position: relative; padding-left: 9px; }
.win-x { opacity: .8; }
.win-pin { width: 14px; height: 14px; margin-left: 9px; color: #bcbfc2; }
.win-ttl { position: absolute; left: 0; right: 0; top: 6px; text-align: center; color: #b0b3b5; }
.win-btns { margin-left: auto; display: flex; gap: 13px; padding-right: 11px; }
.win-tb { height: 46px; flex: none; display: flex; align-items: center; padding: 0 0 2px 11.5px; }
.hw { width: 5px; margin-right: 3.5px; height: 32px; }
.hw i { height: 32px; }
.wt { width: 32px; height: 30px; flex: none; display: flex; align-items: center; justify-content: center; border-radius: 3px; }
.wt .i { width: 20px; height: 20px; }
.wt.on { background: #d2d4d6; border: 1px solid #b4b7ba; }
.win-body { flex: 1; display: flex; gap: 4px; padding: 0 5px 5px 5px; min-height: 0; }
.scene-dock { width: 277px; flex: none; display: flex; flex-direction: column; border: 1px solid #c4c7c9; border-radius: 3px; background: #f4f6f6; }
.dock-title.st { border: 0; margin: 0; height: 29px; padding: 0 8px 2px 4px; background: transparent; }
.tabs.st { margin: 0; padding-left: 1px; background: transparent; }
.t1 { width: 80.5px; } .t2 { width: 78.5px; } .t3 { width: 81px; }
.help-panel { flex: 1; margin: 0 1px 1px 1px; border: 1px solid #c4c7c9; border-radius: 3px; padding: 0 8.5px 8px 8.5px; display: flex; flex-direction: column; min-height: 0; }
.search { height: 56px; margin-bottom: 2px; flex: none; display: flex; align-items: center; padding-left: 5px; }
.search-l { width: 54px; flex: none; }
.inp { display: block; background: #fcfcfc; border: 1px solid #c4c7c9; border-radius: 3px; height: 30px; }
.search .inp { width: 190px; }
.cmd { flex: 1; background: #fcfcfc; border: 1px solid #c4c7c9; border-radius: 3px; min-height: 0; overflow: hidden; }
.cmd-h { height: 30px; background: #eff0f1; border-bottom: 1px solid #cdcfd1; display: flex; align-items: center; padding-left: 6px; }
.cr { display: flex; height: 24px; align-items: center; }
.cr .br { height: 24px; margin-right: 3px; }

.view-col { flex: 1; display: flex; flex-direction: column; min-width: 0; }
.vtabs { display: flex; height: 31px; flex: none; }
.vtab { display: flex; align-items: center; justify-content: space-between; padding: 0 7px 2px 8px; background: #c6c8ca; border-radius: 3px 3px 0 0; white-space: nowrap; }
.vtab .db { margin-left: 6px; flex: none; }
.vtab.sel { background: #f4f6f6; border-top: 3px solid #b6dcf3; border-right: 1px solid #c4c7c9; padding: 0 7px 4px 7px; }
.v1 { width: 102px; } .v2 { width: 229px; }
.black { width: 1011px; height: 575px; margin: 1px 0 0 3px; background: #000; flex: none; }
.output { flex: 1; margin-top: 6px; border: 1px solid #c4c7c9; border-radius: 3px; background: #f4f6f6; display: flex; flex-direction: column; min-height: 0; }
.dock-title.ot { border: 0; margin: 0; background: transparent; height: 29px; padding: 0 7px 4px 4px; }
.filter { display: flex; height: 24px; align-items: center; margin: 6px 8px 0 9px; flex: none; }
.finp { width: 944px; height: 20px; background: #fcfcfc; border-radius: 4px; display: flex; justify-content: flex-end; align-items: center; padding-right: 8px; }
.mag { width: 9px; height: 14px; display: block; }
.oi { width: 16px; height: 20px; display: block; margin-left: 9px; flex: none; }
.log { height: 192px; margin: 3px 6px 0 7px; background: #fcfcfc; border: 1px solid #c4c7c9; border-radius: 3px; overflow: hidden; position: relative; padding-left: 5px; flex: none; font: 13px/16px "Liberation Mono", monospace; color: #ff3a48; }
.ll { height: 16px; white-space: pre; }
.ll:first-child { margin-top: -4px; }
.gap { height: 36px; }
.log-thumb { right: 7px; top: 165px; height: 20px; }
.session { flex: 1; display: flex; align-items: center; padding: 3px 0 0 12px; }
.session-l { width: 60.5px; flex: none; }
.session .inp { width: 929px; }
```
